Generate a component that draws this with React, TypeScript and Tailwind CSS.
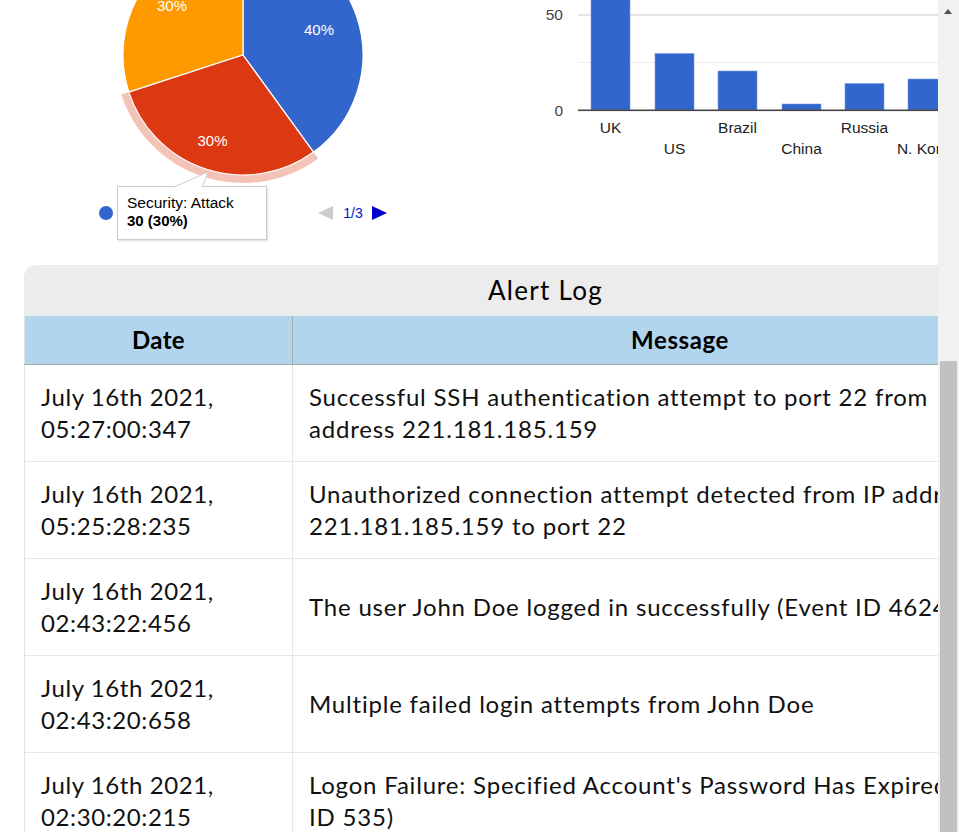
import React from "react";

const ROWS = [
  {
    date: ["July 16th 2021,", "05:27:00:347"],
    msg: ["Successful SSH authentication attempt to port 22 from", "address 221.181.185.159"],
  },
  {
    date: ["July 16th 2021,", "05:25:28:235"],
    msg: ["Unauthorized connection attempt detected from IP address", "221.181.185.159 to port 22"],
  },
  {
    date: ["July 16th 2021,", "02:43:22:456"],
    msg: ["The user John Doe logged in successfully (Event ID 4624)"],
  },
  {
    date: ["July 16th 2021,", "02:43:20:658"],
    msg: ["Multiple failed login attempts from John Doe"],
  },
  {
    date: ["July 16th 2021,", "02:30:20:215"],
    msg: ["Logon Failure: Specified Account's Password Has Expired (Event", "ID 535)"],
  },
];

// bar top (page coords), bar left, label row
const BARS = [
  { name: "UK", top: -40, x: 591, row: 0 },
  { name: "US", top: 53.5, x: 655, row: 1 },
  { name: "Brazil", top: 71, x: 718, row: 0 },
  { name: "China", top: 104, x: 782, row: 1 },
  { name: "Russia", top: 83.5, x: 845, row: 0 },
  { name: "N. Korea", top: 79, x: 908, row: 1 },
];

const chartFont = "'Liberation Sans', Arial, sans-serif";

function PieChart() {
  return (
    <svg width="469" height="265" className="block">
      <g stroke="#ffffff" strokeWidth="1.2">
        <path d="M243,55 L243,-65 A120,120 0 0 1 313.53,152.08 Z" fill="#3366cc" />
        <path d="M243,55 L128.87,92.08 A120,120 0 0 1 243,-65 Z" fill="#ff9900" />
        <path d="M243,55 L313.53,152.08 A120,120 0 0 1 128.87,92.08 Z" fill="#dc3912" />
      </g>
      <path
        d="M318.24,158.55 A128,128 0 0 1 121.26,94.55 L128.4,92.2 A120.5,120.5 0 0 0 313.83,152.48 Z"
        fill="#dc3912"
        fillOpacity="0.3"
      />
      <g fill="#ffffff" fontFamily={chartFont} fontSize="15" textAnchor="middle">
        <text x="319" y="35">40%</text>
        <text x="212.5" y="146">30%</text>
        <text x="172" y="11">30%</text>
      </g>
      <circle cx="106" cy="213" r="7" fill="#3366cc" />
      <path d="M333,206 L333,220 L318,213 Z" fill="#cccccc" />
      <text x="353" y="218" fill="#0011cc" fontFamily={chartFont} fontSize="14" textAnchor="middle">
        1/3
      </text>
      <path d="M372,206 L372,220 L387,213 Z" fill="#0000cc" />
    </svg>
  );
}

function BarChart() {
  const ox = 469;
  return (
    <svg width="469" height="265" className="block">
      <g transform={`translate(${-ox},0)`}>
        <rect x="578" y="62" width="360" height="1" fill="#ebebeb" />
        <rect x="578" y="14.5" width="360" height="1" fill="#cccccc" />
        {BARS.map((b) => (
          <rect
            key={b.name}
            x={b.x}
            y={b.top}
            width="39"
            height={110 - b.top}
            fill="#3366cc"
            stroke="#7b9be0"
            strokeWidth="0.6"
          />
        ))}
        <rect x="578" y="109.5" width="360" height="1.6" fill="#444444" />
        <g fontFamily={chartFont} fontSize="15.5" fill="#444444" textAnchor="end">
          <text x="563" y="20">50</text>
          <text x="563" y="116">0</text>
        </g>
        <g fontFamily={chartFont} fontSize="15.5" fill="#222222" textAnchor="middle">
          {BARS.map((b) => (
            <text key={b.name} x={b.x + 19.5} y={b.row === 0 ? 133 : 154}>
              {b.name}
            </text>
          ))}
        </g>
      </g>
    </svg>
  );
}

function Tooltip() {
  return (
    <div
      className="absolute left-[117px] top-[186px] h-[54px] w-[150px] border border-[#cccccc] bg-white px-[9px] pt-[7px] leading-[18px] text-black shadow-[1px_1px_2px_rgba(0,0,0,0.15)]"
      style={{ fontFamily: chartFont }}
    >
      <svg width="36" height="16" className="absolute left-[55px] top-[-15px]">
        <path d="M0,15.5 L35,0 L29,15.5" fill="#ffffff" stroke="#cccccc" strokeWidth="1" />
      </svg>
      <div className="text-[15.5px]">Security: Attack</div>
      <div className="text-[15px] font-bold">30 (30%)</div>
    </div>
  );
}

export default function App() {
  return (
    <div
      className="flex h-[832px] w-[959px] overflow-hidden bg-white text-[#111111]"
      style={{ fontFamily: "Lato, 'Noto Sans', sans-serif" }}
    >
      <div className="w-[938px] shrink-0 overflow-hidden">
        <div className="relative grid h-[265px] grid-cols-2">
          <PieChart />
          <BarChart />
          <Tooltip />
        </div>

        <section className="ml-[24px] w-[1043px]">
          <h2 className="rounded-tl-[12px] bg-[#ececec] py-2 text-center text-[26px] leading-[35px] tracking-[1.3px] text-black">
            Alert Log
          </h2>
          <table className="w-full table-fixed border-collapse border-l border-[#e3e3e3]">
            <colgroup>
              <col className="w-[268px]" />
              <col />
            </colgroup>
            <thead>
              <tr className="bg-[#b1d5ec] text-black">
                <th className="border-b border-[#a9a9a9] py-2 text-[24px] leading-[32px] font-bold tracking-[0.3px]">
                  Date
                </th>
                <th className="border-b border-l border-[#a9a9a9] py-2 text-[24px] leading-[32px] font-bold tracking-[0.6px]">
                  Message
                </th>
              </tr>
            </thead>
            <tbody>
              {ROWS.map((r, i) => (
                <tr key={i} className="border-b border-[#e6e6e6]">
                  <td className="px-4 py-4 align-middle text-[24px] leading-[32px] tracking-[0.6px]">
                    {r.date[0]}
                    <br />
                    {r.date[1]}
                  </td>
                  <td className="whitespace-nowrap border-l border-[#e6e6e6] px-4 py-4 align-middle text-[24px] leading-[32px] tracking-[0.8px]">
                    {r.msg.map((line, j) => (
                      <React.Fragment key={j}>
                        {j > 0 && <br />}
                        {line}
                      </React.Fragment>
                    ))}
                  </td>
                </tr>
              ))}
            </tbody>
          </table>
        </section>
      </div>

      <div className="relative w-[21px] shrink-0 bg-[#f1f1f1]">
        <div className="absolute left-[6px] top-[9px] h-0 w-0 border-x-[4.5px] border-b-[5px] border-x-transparent border-b-[#505050]" />
        <div className="absolute left-[2px] top-[361px] bottom-0 w-[17px] bg-[#c1c1c1]" />
      </div>
    </div>
  );
}
